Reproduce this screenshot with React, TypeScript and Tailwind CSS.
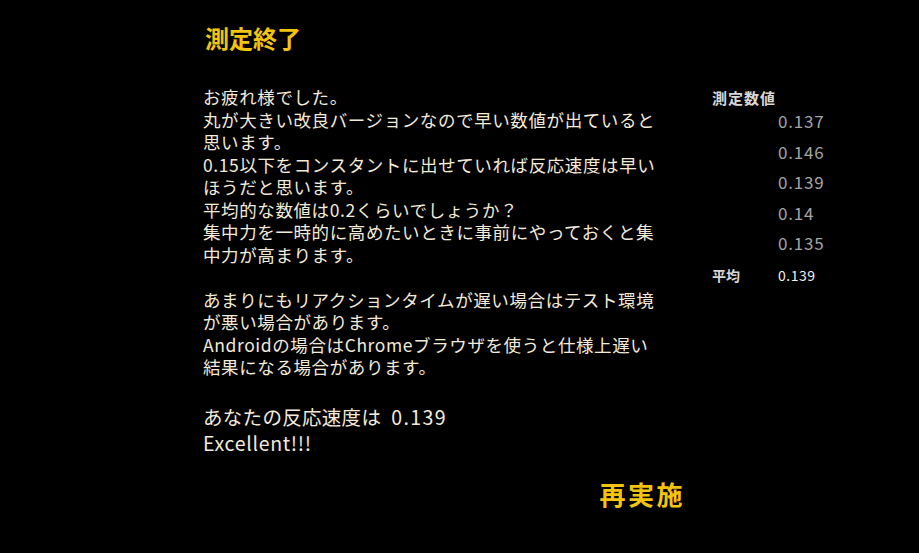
const font = { fontFamily: '"Noto Sans CJK JP", "Noto Sans", sans-serif' };

const measurements = ["0.137", "0.146", "0.139", "0.14", "0.135"];

export default function App() {
  return (
    <div className="min-h-[553px] w-full bg-black text-[#f3ead8]" style={font}>
      <div className="flex pl-[203px] pt-[22px]">
        <div className="w-[470px] shrink-0">
          <h1 className="pl-[2px] text-[24px] font-bold leading-[32px] text-[#f2c40f]">測定終了</h1>

          <div className="mt-[32px] w-[460px] text-[17.5px] leading-[22.5px] tracking-[0.6px]">
            <p>お疲れ様でした。</p>
            <p>丸が大きい改良バージョンなので早い数値が出ていると思います。</p>
            <p>0.15以下をコンスタントに出せていれば反応速度は早いほうだと思います。</p>
            <p>平均的な数値は0.2くらいでしょうか？</p>
            <p>集中力を一時的に高めたいときに事前にやっておくと集中力が高まります。</p>
            <p className="mt-[22.5px]">あまりにもリアクションタイムが遅い場合はテスト環境が悪い場合があります。</p>
            <p>Androidの場合はChromeブラウザを使うと仕様上遅い結果になる場合があります。</p>
          </div>

          <div className="mt-[24px] text-[19.5px] leading-[27px] tracking-[0.3px]">
            <p>
              あなたの反応速度は<span className="ml-[10px] tracking-[1.4px]">0.139</span>
            </p>
            <p className="-mt-[1px] tracking-[0.7px]">Excellent!!!</p>
          </div>

          <div className="mt-[21px] flex justify-end">
            <button className="mr-[-12px] text-[26px] font-bold leading-[34px] tracking-[2.5px] text-[#f2c40f]">再実施</button>
          </div>
        </div>

        <div className="ml-[39px] mt-[66px] w-[140px]">
          <div className="text-[15px] font-bold leading-[20px] tracking-[1px] text-[#d8d8d8]">測定数値</div>
          <div className="-mt-[2px] pl-[66px]">
            {measurements.map((m, i) => (
              <div key={i} className="h-[30.5px] text-[17px] leading-[30.5px] tracking-[0.8px] text-[#a4a4a4]">
                {m}
              </div>
            ))}
          </div>
          <div className="mt-[6px] flex text-[14px] leading-[20px]">
            <span className="w-[66px] font-bold text-[#d8d8d8]">平均</span>
            <span className="tracking-[0.5px] text-[#f0f0f0]">0.139</span>
          </div>
        </div>
      </div>
    </div>
  );
}
